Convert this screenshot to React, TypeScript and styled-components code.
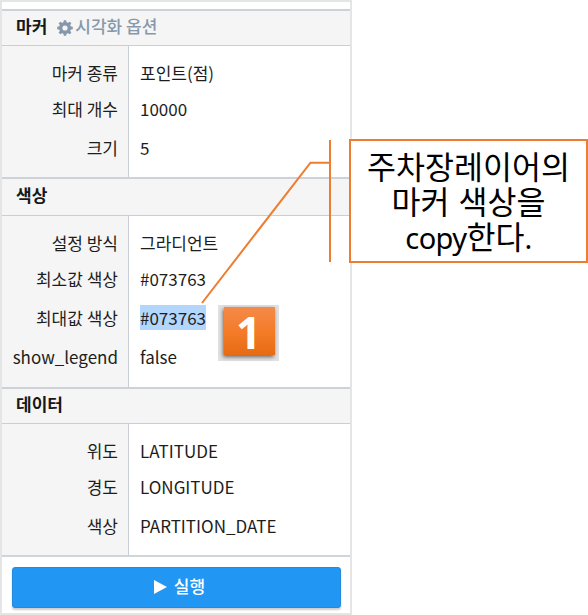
import React from "react";
import styled, { createGlobalStyle } from "styled-components";

const GlobalStyle = createGlobalStyle`
  *, *::before, *::after { box-sizing: border-box; }
  body { margin: 0; background: #fff; overflow: hidden; }
`;

const Page = styled.main`
  position: relative;
  width: 588px;
  height: 615px;
  background: #fff;
  font-family: "Noto Sans CJK KR", sans-serif;
  color: #1d1d1d;
`;

const Panel = styled.section`
  display: flex;
  flex-direction: column;
  width: 352px;
  height: 615px;
  padding-top: 7px;
  border: 2px solid #e5e5e5;
  background: #fff;
`;

const SectionHeader = styled.header<{ $height: number }>`
  display: flex;
  align-items: center;
  height: ${(p) => p.$height}px;
  padding: 0 14px 4px;
  border-top: 2px solid #cdd2d9;
  border-bottom: 1px solid #c9cfd6;
  background: #f5f5f5;
`;

const SectionTitle = styled.h2`
  margin: 0;
  font-size: 17px;
  line-height: 24px;
  font-weight: 700;
  color: #171717;
`;

const OptionLink = styled.span`
  display: flex;
  align-items: center;
  gap: 2px;
  margin-left: 10px;
  font-size: 17px;
  line-height: 24px;
  font-weight: 500;
  color: #8698ac;

  svg {
    margin-top: 4px;
  }
`;

const SectionBody = styled.div<{ $height: number }>`
  height: ${(p) => p.$height}px;
  padding-top: 8px;
  background: linear-gradient(to right, #f5f5f5 126px, #c9ced6 126px, #c9ced6 127px, #fff 127px);
`;

const Row = styled.div<{ $tall?: boolean }>`
  display: grid;
  grid-template-columns: 127px 1fr;
  align-items: center;
  height: ${(p) => (p.$tall ? 42 : 36)}px;
  font-size: 17px;
  line-height: 25px;
  white-space: nowrap;
`;

const Label = styled.span`
  padding-right: 11px;
  text-align: right;
`;

const Value = styled.span`
  padding-left: 11px;
`;

const Selection = styled.mark`
  display: inline-block;
  background: #b3d6fd;
  color: inherit;
`;

const Footer = styled.footer`
  flex: 1;
  padding: 10px 9px 0 10px;
  border-top: 2px solid #d0d5da;
`;

const RunButton = styled.button`
  display: flex;
  align-items: center;
  justify-content: center;
  gap: 7px;
  width: 100%;
  height: 41px;
  padding: 0 0 4px 6px;
  border: 1px solid #2489df;
  border-radius: 3px;
  background: #2196f3;
  box-shadow: 0 2px 2px rgba(0, 0, 0, 0.2);
  color: #fff;
  font: 500 17px/24px "Noto Sans CJK KR", sans-serif;

  svg {
    margin-top: 2px;
  }
`;

const Leader = styled.svg`
  position: absolute;
  inset: 0;
  pointer-events: none;
`;

const Callout = styled.aside`
  position: absolute;
  top: 139px;
  left: 349px;
  width: 239px;
  height: 124px;
  padding-top: 7px;
  border: 2px solid #ed7d31;
  background: #fff;
  color: #000;
  font-size: 31.5px;
  line-height: 35px;
  text-align: center;
  white-space: nowrap;
  word-spacing: 2px;
`;

const Latin = styled.span`
  font-family: "Noto Sans", sans-serif;
  font-size: 29px;
  line-height: 1;
  letter-spacing: -0.6px;
`;

const StepBadge = styled.div`
  position: absolute;
  top: 305px;
  left: 218px;
  width: 61px;
  height: 56px;
  padding: 2px 4px 6px 6px;
  background: #e2e2e2;
`;

const StepNumber = styled.div`
  display: flex;
  align-items: center;
  justify-content: center;
  height: 48px;
  padding: 2px 2px 0 0;
  background: linear-gradient(#f48a4a, #f47a26 55%, #e76b14);
  box-shadow: -1px 2px 4px rgba(0, 0, 0, 0.55);
  color: #fff;
  font: 700 44px/48px "Noto Sans", sans-serif;
`;

type Item = { label: string; value: string; tall?: boolean; selected?: boolean };
type Group = { title: string; headerHeight: number; bodyHeight: number; options?: boolean; items: Item[] };

const groups: Group[] = [
  {
    title: "마커",
    headerHeight: 37,
    bodyHeight: 131,
    options: true,
    items: [
      { label: "마커 종류", value: "포인트(점)" },
      { label: "최대 개수", value: "10000" },
      { label: "크기", value: "5", tall: true },
    ],
  },
  {
    title: "색상",
    headerHeight: 39,
    bodyHeight: 171,
    items: [
      { label: "설정 방식", value: "그라디언트" },
      { label: "최소값 색상", value: "#073763" },
      { label: "최대값 색상", value: "#073763", tall: true, selected: true },
      { label: "show_legend", value: "false" },
    ],
  },
  {
    title: "데이터",
    headerHeight: 37,
    bodyHeight: 131,
    items: [
      { label: "위도", value: "LATITUDE" },
      { label: "경도", value: "LONGITUDE" },
      { label: "색상", value: "PARTITION_DATE", tall: true },
    ],
  },
];

const toothAngles = [0, 45, 90, 135];

function GearIcon() {
  return (
    <svg width="16" height="16" viewBox="0 0 16 16">
      <circle cx="8" cy="8" r="4.3" fill="none" stroke="currentColor" strokeWidth="3.4" />
      {toothAngles.map((angle) => (
        <g key={angle} transform={`rotate(${angle} 8 8)`} fill="currentColor">
          <path d="M6.3 3L6.8 0.2H9.2L9.7 3Z" />
          <path d="M6.3 13L6.8 15.8H9.2L9.7 13Z" />
        </g>
      ))}
    </svg>
  );
}

export default function App() {
  return (
    <Page>
      <GlobalStyle />
      <Panel>
        {groups.map((group) => (
          <React.Fragment key={group.title}>
            <SectionHeader $height={group.headerHeight}>
              <SectionTitle>{group.title}</SectionTitle>
              {group.options && (
                <OptionLink>
                  <GearIcon />
                  시각화 옵션
                </OptionLink>
              )}
            </SectionHeader>
            <SectionBody $height={group.bodyHeight}>
              {group.items.map((item) => (
                <Row key={item.label} $tall={item.tall}>
                  <Label>{item.label}</Label>
                  <Value>{item.selected ? <Selection>{item.value}</Selection> : item.value}</Value>
                </Row>
              ))}
            </SectionBody>
          </React.Fragment>
        ))}
        <Footer>
          <RunButton>
            <svg width="13" height="14" viewBox="0 0 13 14" fill="currentColor">
              <path d="M0 0L13 7L0 14Z" />
            </svg>
            실행
          </RunButton>
        </Footer>
      </Panel>
      <Leader width="588" height="615" fill="none" stroke="#ed7d31" strokeWidth="2">
        <path d="M330 140V262M330 162.7H310.5L202 303" />
      </Leader>
      <Callout>
        주차장레이어의
        <br />
        마커 색상을
        <br />
        <Latin>copy</Latin>한다<Latin>.</Latin>
      </Callout>
      <StepBadge>
        <StepNumber>1</StepNumber>
      </StepBadge>
    </Page>
  );
}
